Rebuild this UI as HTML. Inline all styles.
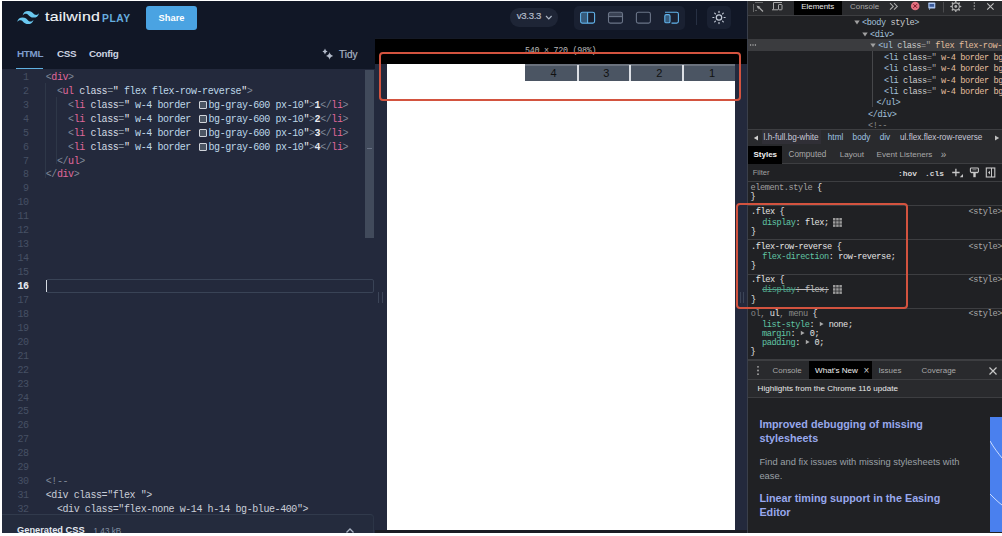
<!DOCTYPE html>
<html><head><meta charset="utf-8">
<style>
*{box-sizing:border-box;margin:0;padding:0}
html,body{width:1002px;height:536px;overflow:hidden;background:#fff}
body{position:relative;font-family:"Liberation Sans",sans-serif}
.a{position:absolute}
.mono{font-family:"Liberation Mono",monospace}
/* tailwind play */
#hdr{left:2px;top:1px;width:746px;height:37px;background:#111726}
#tabs{left:2px;top:38px;width:373px;height:31px;background:#111726}
#editor{left:2px;top:69px;width:373px;height:465px;background:#23293c;overflow:hidden}
#pvwrap{left:375px;top:38px;width:373px;height:496px;background:#23293c}
#pvbar{left:375px;top:38px;width:372px;height:26px;background:#000}
#pv{left:387px;top:64px;width:348px;height:466px;background:#fff}
#vsep{left:747px;top:1px;width:1px;height:533px;background:#3a3f4a}
/* devtools */
#dt{left:748px;top:1px;width:254px;height:533px;background:#202124;overflow:hidden;font-size:8px;color:#c8c8c8}
.ln{position:absolute;left:0;width:26.7px;text-align:right;color:#465064;font-size:10px;letter-spacing:-0.42px;line-height:14px}
.act{color:#e8ecf2;font-weight:bold}
.c{color:#c9ced8}
.cl{position:absolute;left:43.75px;white-space:pre;font-size:10px;letter-spacing:-0.42px;color:#d3d9e2;line-height:14px}
.t{color:#e0689b}.p{color:#7f8898}.s{color:#bdd7e8}.w{color:#e8eaf0}.e{color:#7e8c9a}
.sw{display:inline-block;width:8px;height:8px;border:1px solid #cfd3da;background:#4b5563;vertical-align:-1px;margin:0 2px 0 2px;border-radius:1px}
</style></head><body>

<!-- header -->
<div id="hdr" class="a"></div>
<svg class="a" style="left:16.5px;top:10.8px" width="22.2" height="13.4" viewBox="0 0 54 33"><path fill="#6ac8f0" d="M27 0c-7.2 0-11.7 3.6-13.5 10.8 2.7-3.6 5.85-4.95 9.45-4.05 2.054.513 3.522 2.004 5.147 3.653C30.744 13.09 33.808 16.2 40.5 16.2c7.2 0 11.7-3.6 13.5-10.8-2.7 3.6-5.85 4.95-9.45 4.05-2.054-.513-3.522-2.004-5.147-3.653C36.756 3.11 33.692 0 27 0zM13.5 16.2C6.3 16.2 1.8 19.8 0 27c2.7-3.6 5.85-4.95 9.45-4.05 2.054.514 3.522 2.004 5.147 3.653C17.244 29.29 20.308 32.4 27 32.4c7.2 0 11.7-3.6 13.5-10.8-2.7 3.6-5.85 4.95-9.45 4.05-2.054-.513-3.522-2.004-5.147-3.653C23.256 19.31 20.192 16.2 13.5 16.2z"/></svg>
<div class="a" style="left:45px;top:9.2px;font-size:13.3px;color:#f1f5f9;letter-spacing:0.2px;line-height:16px;transform:scaleX(1.2);transform-origin:0 0;-webkit-text-stroke:0.1px #f1f5f9">tailwind</div>
<div class="a" style="left:102px;top:13.6px;font-size:10.3px;font-weight:bold;color:#66addf;letter-spacing:0.55px;line-height:10px">PLAY</div>
<div class="a" style="left:146px;top:6px;width:51px;height:24px;background:#4aa3e2;border-radius:3px;color:#fff;font-size:9.3px;font-weight:bold;text-align:center;line-height:24px">Share</div>

<div class="a" style="left:510px;top:8px;width:48px;height:18.5px;background:#1e2536;border-radius:9px"></div>
<div class="a" style="left:516.8px;top:10.6px;color:#b4bccb;font-size:9.6px;line-height:10px;letter-spacing:-0.3px;-webkit-text-stroke:0.2px #b4bccb">v3.3.3</div>
<svg class="a" style="left:544.5px;top:15px" width="8" height="5" viewBox="0 0 8 5"><path d="M1 1l2.8 2.8 2.8-2.8" stroke="#aab4c4" stroke-width="1.2" fill="none"/></svg>

<div class="a" style="left:574px;top:6px;width:111px;height:24px;background:#1a2132;border-radius:5px"></div>
<svg class="a" style="left:579px;top:11px" width="106" height="14" viewBox="0 0 106 14">
 <rect x="1.6" y="1.3" width="14" height="10.8" rx="1.8" fill="none" stroke="#62b4ec" stroke-width="1.1"/>
 <rect x="2.1" y="1.8" width="6.4" height="9.8" fill="#62b4ec" opacity=".4"/>
 <line x1="8.6" y1="1.3" x2="8.6" y2="12.1" stroke="#62b4ec" stroke-width="1.1"/>
 <rect x="29.5" y="1.3" width="14" height="10.8" rx="1.8" fill="none" stroke="#6b7588" stroke-width="1.1"/>
 <rect x="30" y="1.8" width="13" height="3.6" fill="#6b7588" opacity=".4"/>
 <line x1="29.5" y1="5.6" x2="43.5" y2="5.6" stroke="#6b7588" stroke-width="1.1"/>
 <rect x="57.4" y="1.3" width="14" height="10.8" rx="1.8" fill="none" stroke="#6b7588" stroke-width="1.1"/>
 <path d="M86 1.3h11.6a1.8 1.8 0 0 1 1.8 1.8v7.2a1.8 1.8 0 0 1-1.8 1.8H92.5" fill="none" stroke="#62b4ec" stroke-width="1.1"/>
 <rect x="85.8" y="3.6" width="5.2" height="8.2" rx="1.4" fill="#62b4ec" fill-opacity=".4" stroke="#62b4ec" stroke-width="1.1"/>
</svg>
<div class="a" style="left:696px;top:9px;width:1px;height:16px;background:#273043"></div>
<div class="a" style="left:707px;top:6px;width:24px;height:23px;background:#1a2132;border-radius:5px"></div>
<svg class="a" style="left:711px;top:10px" width="16" height="16" viewBox="0 0 16 16">
 <circle cx="8" cy="7.5" r="2.7" fill="none" stroke="#c3cad6" stroke-width="1.2"/>
 <g stroke="#c3cad6" stroke-width="1.2" stroke-linecap="round">
 <line x1="8" y1="1.4" x2="8" y2="2.4"/><line x1="8" y1="12.6" x2="8" y2="13.6"/>
 <line x1="1.9" y1="7.5" x2="2.9" y2="7.5"/><line x1="13.1" y1="7.5" x2="14.1" y2="7.5"/>
 <line x1="3.7" y1="3.2" x2="4.4" y2="3.9"/><line x1="11.6" y1="11.1" x2="12.3" y2="11.8"/>
 <line x1="3.7" y1="11.8" x2="4.4" y2="11.1"/><line x1="11.6" y1="3.9" x2="12.3" y2="3.2"/>
 </g></svg>

<!-- tabs -->
<div id="tabs" class="a"></div>
<div class="a" style="left:17px;top:47.8px;font-size:9.9px;font-weight:bold;color:#7d9ccc;line-height:11px;letter-spacing:-0.3px">HTML</div>
<div class="a" style="left:16px;top:68px;width:27px;height:1.5px;background:#5fb0e0"></div>
<div class="a" style="left:57px;top:47.8px;font-size:9.9px;font-weight:bold;color:#cdd4e2;line-height:11px;letter-spacing:-0.3px">CSS</div>
<div class="a" style="left:89px;top:47.8px;font-size:9.9px;font-weight:bold;color:#cdd4e2;line-height:11px;letter-spacing:-0.3px">Config</div>
<svg class="a" style="left:322px;top:48px" width="12" height="12" viewBox="0 0 12 12">
 <path fill="#b4bccb" d="M3 0.6Q3.5 3 5.6 3.5Q3.5 4 3 6.4Q2.5 4 0.4 3.5Q2.5 3 3 0.6z"/>
 <path fill="#b4bccb" d="M7.6 4.1Q8.2 7.3 11.2 7.9Q8.2 8.5 7.6 11.7Q7 8.5 4 7.9Q7 7.3 7.6 4.1z"/>
</svg>
<div class="a" style="left:339px;top:48.5px;font-size:10px;color:#aab4c4;line-height:11px;-webkit-text-stroke:0.2px #aab4c4">Tidy</div>

<!-- editor -->
<div id="editor" class="a mono">
 <div class="a" style="left:43px;top:14px;width:1px;height:95px;background:#2e3748"></div>
 <div class="a" style="left:54px;top:28px;width:1px;height:67px;background:#2e3748"></div>
 <div class="a" style="left:363px;top:1px;width:9px;height:168px;background:#414a5b"></div>
 <div class="a" style="left:365px;top:78.5px;width:5px;height:1.2px;background:#687184"></div>
 <div class="a" style="left:44px;top:210px;width:328px;height:14px;border:1px solid #394356;border-radius:2px"></div>
 <div class="a" style="left:44px;top:211px;width:1.3px;height:12px;background:#d5dae2"></div>
</div>
<div id="code" class="a mono" style="left:2px;top:69px;width:373px;height:445px;overflow:hidden">
<div class="ln" style="top:1.90px">1</div>
<div class="cl" style="top:1.90px"><span class="p">&lt;</span><span class="t">div</span><span class="p">&gt;</span></div>
<div class="ln" style="top:15.84px">2</div>
<div class="cl" style="top:15.84px">  <span class="p">&lt;</span><span class="t">ul</span> class<span class="e">=</span><span class="w">"</span><span class="s"> flex flex-row-reverse</span><span class="w">"</span><span class="p">&gt;</span></div>
<div class="ln" style="top:29.78px">3</div>
<div class="cl" style="top:29.78px">    <span class="p">&lt;</span><span class="t">li</span> class<span class="e">=</span><span class="w">"</span><span class="s"> w-4 border <i class="sw"></i>bg-gray-600 px-10</span><span class="w">"</span><span class="p">&gt;</span><span class="w" style="font-weight:bold">1</span><span class="p">&lt;/</span><span class="t">li</span><span class="p">&gt;</span></div>
<div class="ln" style="top:43.72px">4</div>
<div class="cl" style="top:43.72px">    <span class="p">&lt;</span><span class="t">li</span> class<span class="e">=</span><span class="w">"</span><span class="s"> w-4 border <i class="sw"></i>bg-gray-600 px-10</span><span class="w">"</span><span class="p">&gt;</span><span class="w" style="font-weight:bold">2</span><span class="p">&lt;/</span><span class="t">li</span><span class="p">&gt;</span></div>
<div class="ln" style="top:57.66px">5</div>
<div class="cl" style="top:57.66px">    <span class="p">&lt;</span><span class="t">li</span> class<span class="e">=</span><span class="w">"</span><span class="s"> w-4 border <i class="sw"></i>bg-gray-600 px-10</span><span class="w">"</span><span class="p">&gt;</span><span class="w" style="font-weight:bold">3</span><span class="p">&lt;/</span><span class="t">li</span><span class="p">&gt;</span></div>
<div class="ln" style="top:71.60px">6</div>
<div class="cl" style="top:71.60px">    <span class="p">&lt;</span><span class="t">li</span> class<span class="e">=</span><span class="w">"</span><span class="s"> w-4 border <i class="sw"></i>bg-gray-600 px-10</span><span class="w">"</span><span class="p">&gt;</span><span class="w" style="font-weight:bold">4</span><span class="p">&lt;/</span><span class="t">li</span><span class="p">&gt;</span></div>
<div class="ln" style="top:85.54px">7</div>
<div class="cl" style="top:85.54px">  <span class="p">&lt;/</span><span class="t">ul</span><span class="p">&gt;</span></div>
<div class="ln" style="top:99.48px">8</div>
<div class="cl" style="top:99.48px"><span class="p">&lt;/</span><span class="t">div</span><span class="p">&gt;</span></div>
<div class="ln" style="top:113.42px">9</div>
<div class="ln" style="top:127.36px">10</div>
<div class="ln" style="top:141.30px">11</div>
<div class="ln" style="top:155.24px">12</div>
<div class="ln" style="top:169.18px">13</div>
<div class="ln" style="top:183.12px">14</div>
<div class="ln" style="top:197.06px">15</div>
<div class="ln act" style="top:211.00px">16</div>
<div class="ln" style="top:224.94px">17</div>
<div class="ln" style="top:238.88px">18</div>
<div class="ln" style="top:252.82px">19</div>
<div class="ln" style="top:266.76px">20</div>
<div class="ln" style="top:280.70px">21</div>
<div class="ln" style="top:294.64px">22</div>
<div class="ln" style="top:308.58px">23</div>
<div class="ln" style="top:322.52px">24</div>
<div class="ln" style="top:336.46px">25</div>
<div class="ln" style="top:350.40px">26</div>
<div class="ln" style="top:364.34px">27</div>
<div class="ln" style="top:378.28px">28</div>
<div class="ln" style="top:392.22px">29</div>
<div class="ln" style="top:406.16px">30</div>
<div class="cl" style="top:406.16px"><span class="p">&lt;!--</span></div>
<div class="ln" style="top:420.10px">31</div>
<div class="cl" style="top:420.10px"><span class="c">&lt;div class="flex "&gt;</span></div>
<div class="ln" style="top:434.04px">32</div>
<div class="cl" style="top:434.04px"><span class="c">  &lt;div class="flex-none w-14 h-14 bg-blue-400"&gt;</span></div>
<div class="ln" style="top:447.98px">33</div>
</div>

<!-- generated css bar -->
<div class="a" style="left:1px;top:514px;width:373px;height:30px;background:#242b3d;border-top:1px solid #313a4c;border-right:1px solid #2c3547;border-radius:0 4px 0 0"></div>
<div class="a" style="left:17px;top:524.6px;font-size:9.3px;font-weight:bold;color:#e2e8f0;line-height:11px">Generated CSS</div>
<div class="a" style="left:93.5px;top:526.5px;font-size:8.2px;color:#8390a3;line-height:10px">1.43 kB</div>
<svg class="a" style="left:345px;top:526.5px" width="10" height="7" viewBox="0 0 10 7"><path d="M1.5 5.5l3.5-3.5 3.5 3.5" stroke="#aab4c4" stroke-width="1.3" fill="none"/></svg>

<!-- preview -->
<div id="pvwrap" class="a"></div>
<div id="pvbar" class="a"></div>
<div class="a" style="left:375px;top:37.5px;width:372px;height:1px;background:#151a26"></div>
<div class="a mono" style="left:525px;top:45.6px;font-size:8.4px;letter-spacing:-0.28px;color:#b8b8b8;line-height:10px;white-space:pre">540 × 720 (98%)</div>
<div id="pv" class="a"></div>
<div class="a" style="left:375px;top:529.6px;width:372px;height:4px;background:#1b1d24"></div>
<div class="a" style="left:525px;top:64px;width:210px;height:16.7px;background:#4b5563"></div>
<div class="a" style="left:525px;top:64px;width:210px;height:2px;background:#6b727d"></div>
<div class="a" style="left:576.5px;top:65px;width:2px;height:15.7px;background:#dde0e5"></div>
<div class="a" style="left:629.2px;top:65px;width:2px;height:15.7px;background:#dde0e5"></div>
<div class="a" style="left:682.3px;top:65px;width:2px;height:15.7px;background:#dde0e5"></div>
<div class="a" style="left:547.5px;top:66.5px;width:12px;text-align:center;font-size:11px;line-height:13px;color:#111">4</div>
<div class="a" style="left:600.4px;top:66.5px;width:12px;text-align:center;font-size:11px;line-height:13px;color:#111">3</div>
<div class="a" style="left:653.2px;top:66.5px;width:12px;text-align:center;font-size:11px;line-height:13px;color:#111">2</div>
<div class="a" style="left:706px;top:66.5px;width:12px;text-align:center;font-size:11px;line-height:13px;color:#111">1</div>
<div class="a" style="left:378px;top:292px;width:1px;height:11px;background:#3c4558"></div>
<div class="a" style="left:381.5px;top:292px;width:1px;height:11px;background:#3c4558"></div>
<div class="a" style="left:739.5px;top:292px;width:1px;height:11px;background:#3c4558"></div>
<div class="a" style="left:742.5px;top:292px;width:1px;height:11px;background:#3c4558"></div>
<div id="vsep" class="a"></div>

<!-- devtools -->
<div id="dt" class="a"></div>
<!--DT-->
<div class="a" style="left:748px;top:1px;width:254px;height:14px;background:#292a2d;"></div>
<div class="a" style="left:748px;top:15px;width:254px;height:1px;background:#3d3e41;"></div>
<div class="a" style="left:793.5px;top:1px;width:48px;height:14px;background:#000;"></div>
<div class="a" style="left:801.2px;top:1.9px;font-size:7.95px;line-height:10px;color:#e8e8e8;white-space:pre;">Elements</div>
<div class="a" style="left:850px;top:1.9px;font-size:7.95px;line-height:10px;color:#a8a8a8;white-space:pre;">Console</div>
<svg class="a" style="left:748px;top:1px" width="254" height="14" viewBox="748 1 254 14">
<g stroke="#a9a9a9" stroke-width="1" fill="none">
<path d="M755.5 2.5h1M757.5 2.5h1M759.5 2.5h1M761.5 2.5h1M753.5 4.5v1M753.5 6.5v1M753.5 8.5v1M753.5 10.5v1M755.5 10.5h1"/>
<path d="M758 6.5l5 5" stroke-width="1.2"/>
<path d="M773.5 9.5V2.5h8.5M772 9.8h6" stroke-width="1"/>
<rect x="778.5" y="4.5" width="3.5" height="5.3" rx="0.6"/>
<path d="M890 3.2l3.3 3.2-3.3 3.2M894 3.2l3.3 3.2-3.3 3.2" stroke-width="1.1"/>
</g>
<path d="M756.5 5.5l4.2 1.5-1.8.6-.6 1.8z" fill="#a9a9a9"/>
<circle cx="915.2" cy="6" r="4.3" fill="#e2707f"/>
<path d="M913.4 4.2l3.6 3.6M917 4.2l-3.6 3.6" stroke="#7a1020" stroke-width="1"/>
<rect x="928.3" y="2.6" width="7" height="5.8" rx=".6" fill="#a9c3ef"/>
<rect x="929.5" y="4" width="4.6" height="2.8" fill="#3c5c9c"/>
<path d="M929 8.4v1.5l1.6-1.5" fill="#a9c3ef"/>
<line x1="943.5" y1="2" x2="943.5" y2="12.5" stroke="#4a4b4e" stroke-width="1"/>
<g fill="none" stroke="#b0b0b0" stroke-width="1.1">
<circle cx="955.8" cy="6.5" r="3.6"/>
</g>
<g stroke="#b0b0b0" stroke-width="1.6" stroke-linecap="round">
<path d="M955.8 1.7v.4M955.8 10.9v.4M951 6.5h.4M960.2 6.5h.4M952.4 3.1l.3.3M958.9 9.6l.3.3M952.4 9.9l.3-.3M958.9 3.4l.3-.3"/>
</g>
<circle cx="955.8" cy="6.5" r="1.4" fill="#b0b0b0"/>
<g fill="#b0b0b0"><circle cx="974.3" cy="2.9" r=".75"/><circle cx="974.3" cy="5.9" r=".75"/><circle cx="974.3" cy="8.9" r=".75"/></g>
<path d="M987.2 3.3l6.4 6.3M993.6 3.3l-6.4 6.3" stroke="#c0c0c0" stroke-width="1.1"/>
</svg>
<div class="a" style="left:748px;top:38.6px;width:254px;height:12px;background:#3b3c3f;"></div>
<div class="a" style="left:872px;top:51px;width:1px;height:56px;background:#46474a;"></div>
<svg class="a" style="left:854.0px;top:20.0px" width="6" height="5" viewBox="0 0 6 5"><path d="M0.3 0.5h5.4L3 4.6z" fill="#a0a0a0"/></svg>
<div class="a mono" style="left:862.0px;top:18.1px;font-size:8.6px;line-height:10px;color:#ccc;white-space:pre;letter-spacing:-0.4px;"><span style="color:#a4c2dc">&lt;body</span> <span style="color:#cdcdcd">style</span><span style="color:#a4c2dc">&gt;</span></div>
<svg class="a" style="left:862.1px;top:31.700000000000003px" width="6" height="5" viewBox="0 0 6 5"><path d="M0.3 0.5h5.4L3 4.6z" fill="#a0a0a0"/></svg>
<div class="a mono" style="left:870.1px;top:29.8px;font-size:8.6px;line-height:10px;color:#ccc;white-space:pre;letter-spacing:-0.4px;"><span style="color:#a4c2dc">&lt;div&gt;</span></div>
<svg class="a" style="left:870.2px;top:42.7px" width="6" height="5" viewBox="0 0 6 5"><path d="M0.3 0.5h5.4L3 4.6z" fill="#a0a0a0"/></svg>
<div class="a mono" style="left:878.2px;top:40.8px;font-size:8.6px;line-height:10px;color:#ccc;white-space:pre;letter-spacing:-0.4px;"><span style="color:#a4c2dc">&lt;ul</span> <span style="color:#cdcdcd">class</span><span style="color:#a0a0a0">="</span><span style="color:#e4bf9e"> flex flex-row-reverse</span><span style="color:#a0a0a0">"</span></div>
<div class="a mono" style="left:884px;top:52.6px;font-size:8.6px;line-height:10px;color:#ccc;white-space:pre;letter-spacing:-0.4px;"><span style="color:#a4c2dc">&lt;li</span> <span style="color:#cdcdcd">class</span><span style="color:#a0a0a0">="</span><span style="color:#e4bf9e"> w-4 border bg-gray-600 px-10</span></div>
<div class="a mono" style="left:884px;top:64.1px;font-size:8.6px;line-height:10px;color:#ccc;white-space:pre;letter-spacing:-0.4px;"><span style="color:#a4c2dc">&lt;li</span> <span style="color:#cdcdcd">class</span><span style="color:#a0a0a0">="</span><span style="color:#e4bf9e"> w-4 border bg-gray-600 px-10</span></div>
<div class="a mono" style="left:884px;top:75.6px;font-size:8.6px;line-height:10px;color:#ccc;white-space:pre;letter-spacing:-0.4px;"><span style="color:#a4c2dc">&lt;li</span> <span style="color:#cdcdcd">class</span><span style="color:#a0a0a0">="</span><span style="color:#e4bf9e"> w-4 border bg-gray-600 px-10</span></div>
<div class="a mono" style="left:884px;top:87.1px;font-size:8.6px;line-height:10px;color:#ccc;white-space:pre;letter-spacing:-0.4px;"><span style="color:#a4c2dc">&lt;li</span> <span style="color:#cdcdcd">class</span><span style="color:#a0a0a0">="</span><span style="color:#e4bf9e"> w-4 border bg-gray-600 px-10</span></div>
<div class="a mono" style="left:876.5px;top:98.1px;font-size:8.6px;line-height:10px;color:#ccc;white-space:pre;letter-spacing:-0.4px;"><span style="color:#a4c2dc">&lt;/ul&gt;</span></div>
<div class="a mono" style="left:868px;top:109.6px;font-size:8.6px;line-height:10px;color:#ccc;white-space:pre;letter-spacing:-0.4px;"><span style="color:#a4c2dc">&lt;/div&gt;</span></div>
<div class="a mono" style="left:868px;top:121.1px;font-size:8.6px;line-height:10px;color:#ccc;white-space:pre;letter-spacing:-0.4px;"><span style="color:#8a8a8a">&lt;!--</span></div>
<svg class="a" style="left:749px;top:43px" width="9" height="4" viewBox="0 0 9 4"><g fill="#b8b8b8"><circle cx="1.6" cy="2" r=".7"/><circle cx="4" cy="2" r=".7"/><circle cx="6.4" cy="2" r=".7"/></g></svg>
<div class="a" style="left:748px;top:129px;width:254px;height:16px;background:#292a2d;"></div>
<div class="a" style="left:748px;top:129px;width:254px;height:1px;background:#3d3e41;"></div>
<div class="a" style="left:748px;top:144.5px;width:254px;height:1px;background:#3d3e41;"></div>
<div class="a" style="left:762px;top:130px;width:59px;height:14px;background:#302f36;"></div>
<svg class="a" style="left:753px;top:134.5px" width="6" height="6" viewBox="0 0 6 6"><path d="M5 0.5v5L0.8 3z" fill="#d0d0d0"/></svg>
<div class="a" style="left:763.6px;top:132.7px;font-size:8.2px;line-height:10px;color:#c8c8d8;white-space:pre;">l.h-full.bg-white</div>
<div class="a" style="left:827.8px;top:132.7px;font-size:8.2px;line-height:10px;color:#9fc3e3;white-space:pre;">html</div>
<div class="a" style="left:852.6px;top:132.7px;font-size:8.2px;line-height:10px;color:#9fc3e3;white-space:pre;">body</div>
<div class="a" style="left:879.7px;top:132.7px;font-size:8.2px;line-height:10px;color:#9fc3e3;white-space:pre;">div</div>
<div class="a" style="left:900px;top:132.7px;font-size:8.2px;line-height:10px;color:#c8c8d8;white-space:pre;">ul.flex.flex-row-reverse</div>
<svg class="a" style="left:994px;top:134.5px" width="6" height="6" viewBox="0 0 6 6"><path d="M1 0.5v5L5.2 3z" fill="#c0c0c0"/></svg>
<div class="a" style="left:748px;top:145px;width:254px;height:18.5px;background:#292a2d;"></div>
<div class="a" style="left:748px;top:163.3px;width:254px;height:1px;background:#3d3e41;"></div>
<div class="a" style="left:748px;top:145.5px;width:34px;height:18px;background:#000;"></div>
<div class="a" style="left:753.5px;top:150.1px;font-size:8px;line-height:10px;color:#f0f0f0;white-space:pre;font-weight:bold">Styles</div>
<div class="a" style="left:788.6px;top:150.1px;font-size:8.17px;line-height:10px;color:#a8a8a8;white-space:pre;">Computed</div>
<div class="a" style="left:839.7px;top:150.1px;font-size:8.1px;line-height:10px;color:#a8a8a8;white-space:pre;">Layout</div>
<div class="a" style="left:876.6px;top:150.1px;font-size:8.1px;line-height:10px;color:#a8a8a8;white-space:pre;">Event Listeners</div>
<div class="a" style="left:940.7px;top:150.1px;font-size:10px;line-height:10px;color:#a8a8a8;white-space:pre;">»</div>
<div class="a" style="left:748px;top:164px;width:254px;height:17px;background:#202124;"></div>
<div class="a" style="left:748px;top:181px;width:254px;height:1px;background:#3d3e41;"></div>
<div class="a" style="left:752.7px;top:168.2px;font-size:7.6px;line-height:10px;color:#a0a0a0;white-space:pre;">Filter</div>
<div class="a mono" style="left:898px;top:168.5px;font-size:7.9px;line-height:10px;color:#d8d8d8;white-space:pre;letter-spacing:0.02px;font-weight:bold">:hov</div>
<div class="a mono" style="left:925px;top:168.5px;font-size:7.9px;line-height:10px;color:#d8d8d8;white-space:pre;letter-spacing:0.02px;font-weight:bold">.cls</div>
<svg class="a" style="left:948px;top:165px" width="54" height="15" viewBox="948 165 54 15">
<path d="M955.9 168.8v7.4M952.2 172.5h7.4" stroke="#c8c8c8" stroke-width="1.3"/>
<path d="M963 174l0 3.2-3.2 0z" fill="#c8c8c8"/>
<rect x="970.4" y="168" width="8" height="4.3" rx="0.8" fill="none" stroke="#c8c8c8" stroke-width="1.1"/>
<path d="M971 172.6h7" stroke="#c8c8c8" stroke-width="1.2"/>
<rect x="973.3" y="173" width="2.4" height="4.2" fill="#c8c8c8"/>
<path d="M972.5 169.8h4" stroke="#c8c8c8" stroke-width=".6"/>
<rect x="986.3" y="168" width="8.5" height="9" fill="none" stroke="#c8c8c8" stroke-width="1.1"/>
<line x1="991.5" y1="168" x2="991.5" y2="177" stroke="#c8c8c8" stroke-width="1"/>
<path d="M990 170.8v3.6l-2-1.8z" fill="#c8c8c8"/>
</svg>
<div class="a mono" style="left:750.5px;top:182.9px;font-size:8.6px;line-height:10px;color:#ccc;white-space:pre;letter-spacing:-0.4px;"><span style="color:#a0a0a0">element.style</span> <span style="color:#e6e6e6">{</span></div>
<div class="a mono" style="left:750.5px;top:192.1px;font-size:8.6px;line-height:10px;color:#e6e6e6;white-space:pre;letter-spacing:-0.4px;">}</div>
<div class="a" style="left:748px;top:205px;width:254px;height:1px;background:#3d3e41;"></div>
<div class="a mono" style="left:751px;top:207.3px;font-size:8.6px;line-height:10px;color:#e6e6e6;white-space:pre;letter-spacing:-0.4px;">.flex {</div>
<div class="a mono" style="left:762.2px;top:218.1px;font-size:8.6px;line-height:10px;color:#e6e6e6;white-space:pre;letter-spacing:-0.4px;"><span style="color:#60c6a6">display</span>: flex;</div>
<div class="a mono" style="left:751px;top:227.1px;font-size:8.6px;line-height:10px;color:#e6e6e6;white-space:pre;letter-spacing:-0.4px;">}</div>
<div class="a" style="left:748px;top:239.4px;width:254px;height:1px;background:#3d3e41;"></div>
<div class="a mono" style="left:751px;top:241.5px;font-size:8.6px;line-height:10px;color:#e6e6e6;white-space:pre;letter-spacing:-0.4px;">.flex-row-reverse {</div>
<div class="a mono" style="left:762.2px;top:252.2px;font-size:8.6px;line-height:10px;color:#e6e6e6;white-space:pre;letter-spacing:-0.4px;"><span style="color:#60c6a6">flex-direction</span>: row-reverse;</div>
<div class="a mono" style="left:751px;top:261.0px;font-size:8.6px;line-height:10px;color:#e6e6e6;white-space:pre;letter-spacing:-0.4px;">}</div>
<div class="a" style="left:748px;top:273.8px;width:254px;height:1px;background:#3d3e41;"></div>
<div class="a mono" style="left:751px;top:274.9px;font-size:8.6px;line-height:10px;color:#e6e6e6;white-space:pre;letter-spacing:-0.4px;">.flex {</div>
<div class="a mono" style="left:762.2px;top:285.4px;font-size:8.6px;line-height:10px;color:#e6e6e6;white-space:pre;letter-spacing:-0.4px;opacity:.8"><span style="color:#60c6a6;text-decoration:line-through">display</span><span style="text-decoration:line-through">: flex;</span></div>
<div class="a mono" style="left:751px;top:295.1px;font-size:8.6px;line-height:10px;color:#e6e6e6;white-space:pre;letter-spacing:-0.4px;">}</div>
<div class="a" style="left:748px;top:307.5px;width:254px;height:1px;background:#3d3e41;"></div>
<div class="a mono" style="left:968.6px;top:207.3px;font-size:8.6px;line-height:10px;color:#a8a8a8;white-space:pre;letter-spacing:-0.4px;">&lt;style&gt;</div>
<div class="a mono" style="left:968.6px;top:241.5px;font-size:8.6px;line-height:10px;color:#a8a8a8;white-space:pre;letter-spacing:-0.4px;">&lt;style&gt;</div>
<div class="a mono" style="left:968.6px;top:274.9px;font-size:8.6px;line-height:10px;color:#a8a8a8;white-space:pre;letter-spacing:-0.4px;">&lt;style&gt;</div>
<div class="a mono" style="left:968.6px;top:309.3px;font-size:8.6px;line-height:10px;color:#a8a8a8;white-space:pre;letter-spacing:-0.4px;">&lt;style&gt;</div>
<svg class="a" style="left:833px;top:218.0px" width="9" height="9" viewBox="0 0 9 9"><g fill="#9a9a9a"><rect x="0" y="0" width="2.5" height="2.5"/><rect x="3.2" y="0" width="2.5" height="2.5"/><rect x="6.4" y="0" width="2.5" height="2.5"/><rect x="0" y="3.2" width="2.5" height="2.5"/><rect x="3.2" y="3.2" width="2.5" height="2.5"/><rect x="6.4" y="3.2" width="2.5" height="2.5"/><rect x="0" y="6.4" width="2.5" height="2.5"/><rect x="3.2" y="6.4" width="2.5" height="2.5"/><rect x="6.4" y="6.4" width="2.5" height="2.5"/></g></svg>
<svg class="a" style="left:833px;top:285.3px" width="9" height="9" viewBox="0 0 9 9"><g fill="#9a9a9a"><rect x="0" y="0" width="2.5" height="2.5"/><rect x="3.2" y="0" width="2.5" height="2.5"/><rect x="6.4" y="0" width="2.5" height="2.5"/><rect x="0" y="3.2" width="2.5" height="2.5"/><rect x="3.2" y="3.2" width="2.5" height="2.5"/><rect x="6.4" y="3.2" width="2.5" height="2.5"/><rect x="0" y="6.4" width="2.5" height="2.5"/><rect x="3.2" y="6.4" width="2.5" height="2.5"/><rect x="6.4" y="6.4" width="2.5" height="2.5"/></g></svg>
<div class="a mono" style="left:750.7px;top:309.3px;font-size:8.6px;line-height:10px;color:#ccc;white-space:pre;letter-spacing:-0.4px;"><span style="color:#8a8a8a">ol,</span> <span style="color:#e6e6e6">ul</span><span style="color:#8a8a8a">, menu</span> <span style="color:#e6e6e6">{</span></div>
<div class="a mono" style="left:762px;top:319.5px;font-size:8.6px;line-height:10px;color:#e6e6e6;white-space:pre;letter-spacing:-0.4px;"><span style="color:#60c6a6">list-style</span>: <svg width="5" height="6" viewBox="0 0 5 6" style="vertical-align:0px"><path d="M0.8 0.8v4.4L4.6 3z" fill="#a8a8a8"/></svg> none;</div>
<div class="a mono" style="left:762px;top:328.8px;font-size:8.6px;line-height:10px;color:#e6e6e6;white-space:pre;letter-spacing:-0.4px;"><span style="color:#60c6a6">margin</span>: <svg width="5" height="6" viewBox="0 0 5 6" style="vertical-align:0px"><path d="M0.8 0.8v4.4L4.6 3z" fill="#a8a8a8"/></svg> 0;</div>
<div class="a mono" style="left:762px;top:338.4px;font-size:8.6px;line-height:10px;color:#e6e6e6;white-space:pre;letter-spacing:-0.4px;"><span style="color:#60c6a6">padding</span>: <svg width="5" height="6" viewBox="0 0 5 6" style="vertical-align:0px"><path d="M0.8 0.8v4.4L4.6 3z" fill="#a8a8a8"/></svg> 0;</div>
<div class="a mono" style="left:750.5px;top:347.1px;font-size:8.6px;line-height:10px;color:#e6e6e6;white-space:pre;letter-spacing:-0.4px;">}</div>
<div class="a" style="left:748px;top:359px;width:254px;height:2.5px;background:#3d3e41;"></div>
<div class="a" style="left:748px;top:361.4px;width:254px;height:17.6px;background:#292a2d;"></div>
<div class="a" style="left:748px;top:378.6px;width:254px;height:1px;background:#3d3e41;"></div>
<div class="a" style="left:809px;top:361.4px;width:63px;height:17.6px;background:#000;"></div>
<svg class="a" style="left:756px;top:365px" width="4" height="11" viewBox="0 0 4 11"><g fill="#a8a8a8"><circle cx="2" cy="1.8" r=".9"/><circle cx="2" cy="5.5" r=".9"/><circle cx="2" cy="9.2" r=".9"/></g></svg>
<div class="a" style="left:772.6px;top:365.6px;font-size:7.95px;line-height:10px;color:#a8a8a8;white-space:pre;">Console</div>
<div class="a" style="left:815px;top:365.6px;font-size:8.1px;line-height:10px;color:#f0f0f0;white-space:pre;">What's New</div>
<div class="a" style="left:863.5px;top:365.6px;font-size:10px;line-height:10px;color:#c8c8c8;white-space:pre;">×</div>
<div class="a" style="left:878.4px;top:365.6px;font-size:7.96px;line-height:10px;color:#a8a8a8;white-space:pre;">Issues</div>
<div class="a" style="left:921.6px;top:365.6px;font-size:7.93px;line-height:10px;color:#a8a8a8;white-space:pre;">Coverage</div>
<svg class="a" style="left:988px;top:365.5px" width="10" height="10" viewBox="0 0 10 10"><path d="M1.5 1.5l7 7M8.5 1.5l-7 7" stroke="#c8c8c8" stroke-width="1.2"/></svg>
<div class="a" style="left:748px;top:379.6px;width:254px;height:18px;background:#292a2d;"></div>
<div class="a" style="left:748px;top:397.2px;width:254px;height:1px;background:#3d3e41;"></div>
<div class="a" style="left:757.6px;top:384.0px;font-size:8.08px;line-height:10px;color:#e8e8e8;white-space:pre;">Highlights from the Chrome 116 update</div>
<div class="a" style="left:759.4px;top:419.0px;font-size:10.79px;line-height:10px;color:#98a8ec;white-space:pre;font-weight:bold">Improved debugging of missing</div>
<div class="a" style="left:759.4px;top:432.5px;font-size:10.79px;line-height:10px;color:#98a8ec;white-space:pre;font-weight:bold">stylesheets</div>
<div class="a" style="left:759.4px;top:457.0px;font-size:9.4px;line-height:10px;color:#9aa0a6;white-space:pre;">Find and fix issues with missing stylesheets with</div>
<div class="a" style="left:759.4px;top:470.5px;font-size:9.4px;line-height:10px;color:#9aa0a6;white-space:pre;">ease.</div>
<div class="a" style="left:759.4px;top:493.4px;font-size:10.79px;line-height:10px;color:#98a8ec;white-space:pre;font-weight:bold">Linear timing support in the Easing</div>
<div class="a" style="left:759.4px;top:506.9px;font-size:10.79px;line-height:10px;color:#98a8ec;white-space:pre;font-weight:bold">Editor</div>
<div class="a" style="left:990px;top:417px;width:12px;height:115px;background:#4a80ee;"></div>
<svg class="a" style="left:990px;top:417px" width="12" height="115" viewBox="0 0 12 115"><path d="M0 24 C4 31 8 36 12 41" stroke="#c9dbff" stroke-width="1" fill="none"/><path d="M0 77 C4 81 8 85 12 88" stroke="#c9dbff" stroke-width="1" fill="none"/></svg>
<!--/DT-->

<!-- annotations -->
<div class="a" style="left:379px;top:52.3px;width:362px;height:48.5px;border:2.5px solid #d3533f;border-radius:4px"></div>
<div class="a" style="left:735.8px;top:202.7px;width:172px;height:106px;border:2.5px solid #d3533f;border-radius:4px"></div>

<div class="a" style="left:0;top:532.7px;width:1002px;height:4px;background:#fff"></div>
<div class="a" style="left:0;top:0;width:2px;height:536px;background:#fff"></div>
<div class="a" style="left:0;top:0;width:1002px;height:1px;background:#fff"></div>
</body></html>
